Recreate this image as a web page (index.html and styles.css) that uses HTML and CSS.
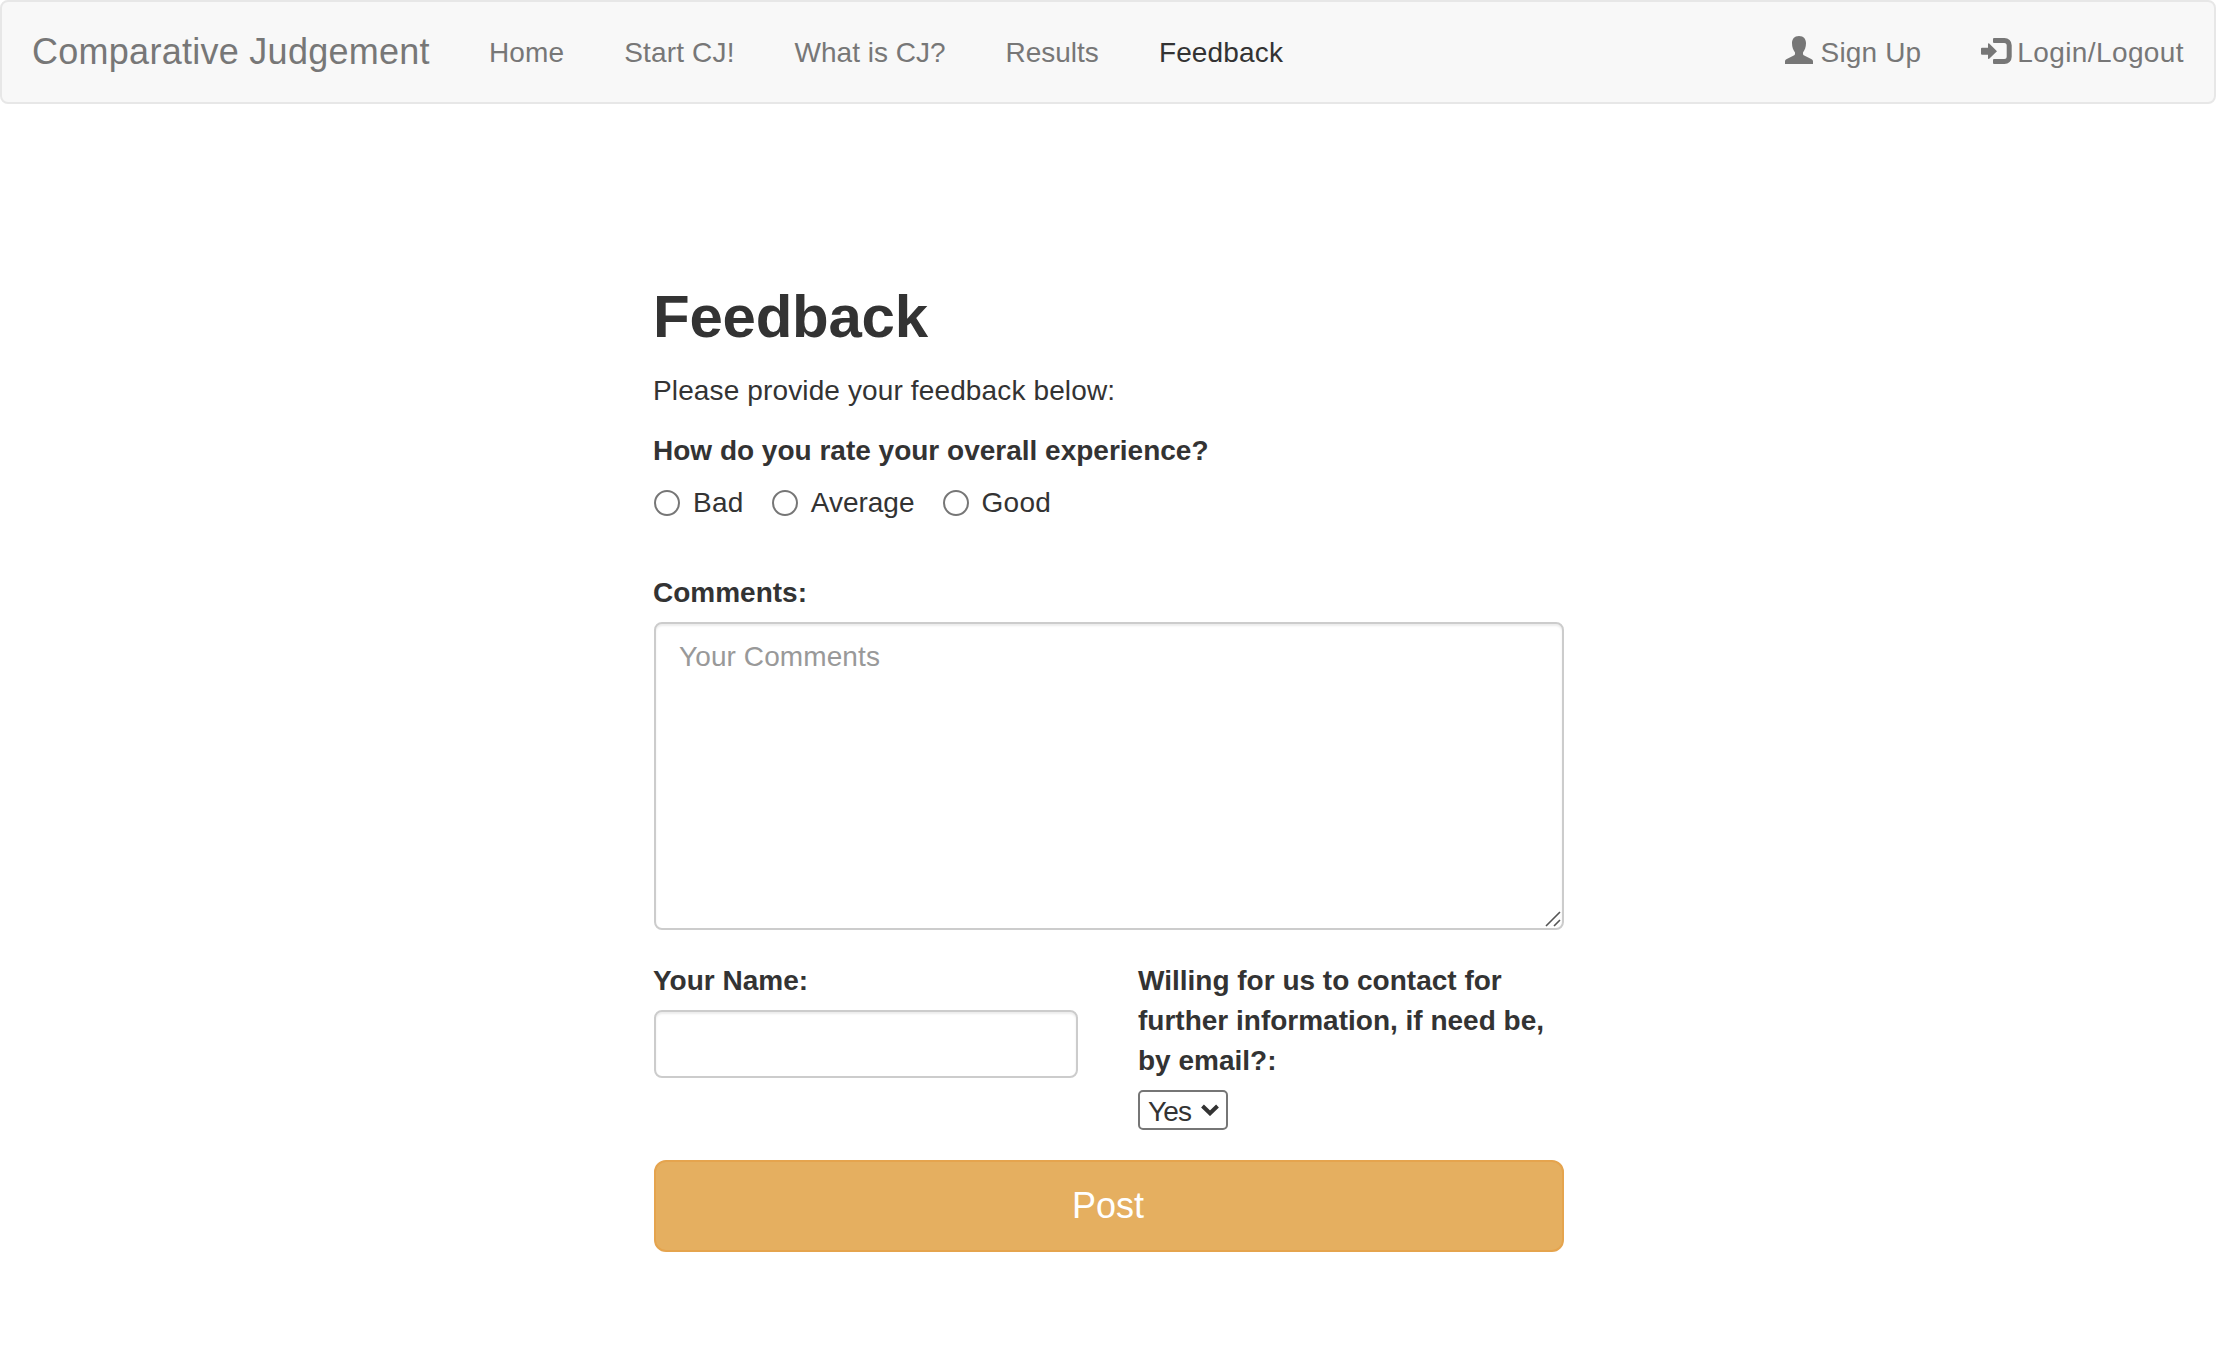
FILE: index.html
```html
<!DOCTYPE html>
<html lang="en">
<head>
<meta charset="utf-8">
<title>Comparative Judgement - Feedback</title>
<link rel="stylesheet" href="styles.css">
</head>
<body>
<nav class="navbar">
  <a class="brand">Comparative Judgement</a>
  <div class="nav-links">
    <a class="nav-link home">Home</a>
    <a class="nav-link start">Start CJ!</a>
    <a class="nav-link">What is CJ?</a>
    <a class="nav-link">Results</a>
    <a class="nav-link active">Feedback</a>
  </div>
  <div class="nav-links nav-right">
    <a class="nav-link signup"><svg class="icon" viewBox="0 0 28 28"><path d="M14 0C18.8 0 21 3.2 21 7.3C21 11.4 19.7 14.2 18 16.4V18C18 18.7 18.5 19.1 19.2 19.4L26.2 23C27.4 23.7 28 24.4 28 25.6V28H0V25.6C0 24.4.6 23.7 1.8 23L8.8 19.4C9.5 19.1 10 18.7 10 18V16.4C8.3 14.2 7 11.4 7 7.3C7 3.2 9.2 0 14 0Z"/></svg>Sign Up</a>
    <a class="nav-link login"><svg class="icon" viewBox="0 0 28 28"><path d="M13 2H23.5A7.2 7.2 0 0 1 30.7 9.2V20.8A7.2 7.2 0 0 1 23.5 28H13Q12 28 12 27V24Q12 23 13 23H23.2A2.5 2.5 0 0 0 25.7 20.5V9.5A2.5 2.5 0 0 0 23.2 7H13Q12 7 12 6V3Q12 2 13 2Z"/><path d="M8.2 7.6L16 15.2L8.2 22.8Q7 23.6 7 22V18.7H1Q0 18.7 0 17.7V12.7Q0 11.7 1 11.7H7V8.2Q7 6.8 8.2 7.6Z"/></svg>Login/Logout</a>
  </div>
</nav>
<main class="content">
  <h2 class="title">Feedback</h2>
  <p class="intro">Please provide your feedback below:</p>
  <form class="form">
    <div class="label">How do you rate your overall experience?</div>
    <div class="radios">
      <label class="option bad"><input class="radio" type="radio" name="rating">Bad</label>
      <label class="option"><input class="radio" type="radio" name="rating">Average</label>
      <label class="option good"><input class="radio" type="radio" name="rating">Good</label>
    </div>
    <label class="label" for="comments">Comments:</label>
    <div class="comments-wrap">
      <textarea class="control comments" id="comments" placeholder="Your Comments"></textarea>
      <svg class="grip" viewBox="0 0 16 16"><path d="M1 15L15 1M9 15L15 9"/></svg>
    </div>
    <div class="row">
      <div class="field">
        <label class="label" for="name">Your Name:</label>
        <input class="control name" id="name" type="text">
      </div>
      <div class="field">
        <label class="label contact" for="contact">Willing for us to contact for<br>further information, if need be,<br>by email?:</label>
        <div class="select-wrap">
          <select class="select" id="contact"><option>Yes</option><option>No</option></select>
          <svg class="arrow" viewBox="0 0 18 12"><path d="M1.5 2L9 9.3L16.5 2"/></svg>
        </div>
      </div>
    </div>
    <button class="post" type="button">Post</button>
  </form>
</main>
</body>
</html>
```
FILE: styles.css
```css
* { box-sizing: border-box; }
body {
  margin: 0;
  background: #fff;
  color: #333;
  font: 28px/40px "Liberation Sans", Arial, sans-serif;
}
.navbar {
  display: flex;
  height: 104px;
  border: 2px solid #e7e7e7;
  border-radius: 8px;
  background: #f8f8f8;
  color: #777;
}
.brand {
  width: 457px;
  padding: 30px 0 30px 30px;
  font-size: 36px;
  letter-spacing: .27px;
  white-space: nowrap;
}
.nav-links { display: flex; }
.nav-link { padding: 31px 30px 29px; white-space: nowrap; }
.home { letter-spacing: .15px; }
.start { letter-spacing: .15px; }
.active { color: #333; letter-spacing: .15px; }
.nav-right { margin-left: auto; }
.icon {
  width: 28px;
  height: 28px;
  margin-right: 8px;
  vertical-align: -2px;
  overflow: visible;
  fill: currentColor;
}
.signup { letter-spacing: .15px; }
.login { letter-spacing: .4px; }
.content {
  width: 910px;
  margin: 180px 0 0 654px;
}
.title {
  margin: 0 0 20px -1px;
  font-size: 60px;
  line-height: 66px;
  font-weight: 700;
  letter-spacing: -.25px;
}
.intro {
  margin: 0 0 19px -1px;
  padding-top: 1px;
  letter-spacing: .13px;
}
.label {
  display: block;
  margin: 0 0 9px -1px;
  padding-top: 1px;
  font-weight: 700;
  white-space: nowrap;
}
.contact { margin-left: 0; }
.radios { display: flex; gap: 28px; margin: 11px 0 50px; }
.option { display: flex; align-items: center; height: 40px; padding-top: 2px; }
.bad { letter-spacing: .3px; }
.good { letter-spacing: .3px; }
.radio {
  appearance: none;
  width: 26px;
  height: 26px;
  margin: 0 13px 0 0;
  border: 2px solid #767676;
  border-radius: 50%;
  background: #fff;
}
.control {
  display: block;
  width: 100%;
  border: 2px solid #ccc;
  border-radius: 8px;
  background: #fff;
  box-shadow: inset 0 2px 2px rgba(0, 0, 0, .075);
  color: #555;
  font: inherit;
}
.comments-wrap { position: relative; margin-bottom: 30px; }
.comments {
  height: 308px;
  padding: 13px 23px 11px;
  letter-spacing: .1px;
  resize: none;
}
.comments::placeholder { color: #999; opacity: 1; }
.grip {
  position: absolute;
  right: 3px;
  bottom: 3px;
  width: 16px;
  height: 16px;
  fill: none;
  stroke: #555;
  stroke-width: 1.6;
}
.row { display: grid; grid-template-columns: 424px 426px; gap: 60px; }
.name { height: 68px; padding: 12px 24px; }
.select-wrap { position: relative; width: 90px; height: 40px; }
.select {
  display: block;
  width: 90px;
  height: 40px;
  padding: 0 0 0 8px;
  appearance: none;
  border: 2px solid #767676;
  border-radius: 5px;
  background: #fff;
  color: #333;
  font: inherit;
  letter-spacing: -.9px;
}
.arrow {
  position: absolute;
  top: 14px;
  right: 9px;
  width: 18px;
  height: 12px;
  fill: none;
  stroke: #333;
  stroke-width: 4;
}
.post {
  display: block;
  width: 100%;
  height: 92px;
  margin-top: 30px;
  padding: 0 2px 0 0;
  border: 2px solid #e5a44e;
  border-radius: 12px;
  background: #e5af60;
  color: #fff;
  font: 36px/48px "Liberation Sans", Arial, sans-serif;
}
```
